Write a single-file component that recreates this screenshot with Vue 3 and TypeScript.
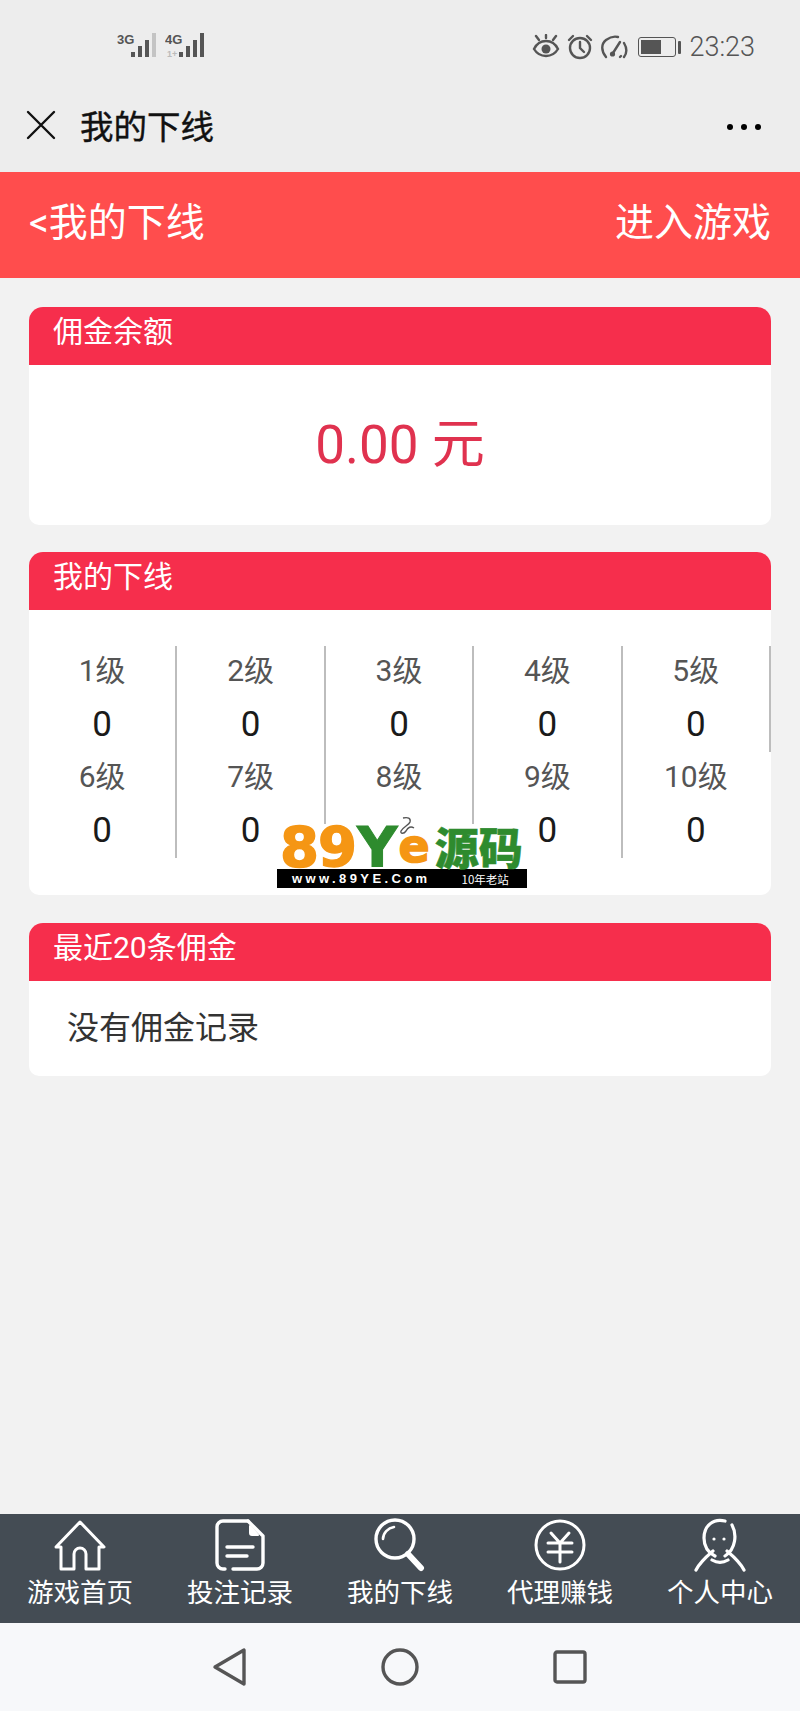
<template>
  <div class="page">
    <!-- status bar -->
    <div class="status">
      <div class="signal">
        <svg width="40" height="26" viewBox="0 0 40 26">
          <text x="0" y="11" class="sig-text">3G</text>
          <rect x="14" y="19" width="4" height="5" fill="#555" />
          <rect x="21" y="13" width="4" height="11" fill="#555" />
          <rect x="28" y="7" width="4" height="17" fill="#555" />
          <rect x="35" y="0" width="4" height="24" fill="#c4c4c4" />
        </svg>
        <svg width="41" height="26" viewBox="0 0 41 26">
          <text x="0" y="11" class="sig-text">4G</text>
          <text x="2" y="24" class="sig-sub">1+</text>
          <rect x="14" y="19" width="4" height="5" fill="#555" />
          <rect x="21" y="13" width="4" height="11" fill="#555" />
          <rect x="28" y="7" width="4" height="17" fill="#555" />
          <rect x="35" y="0" width="4" height="24" fill="#555" />
        </svg>
      </div>
      <div class="status-right">
        <svg width="28" height="26" viewBox="0 0 28 26" fill="none" stroke="#555" stroke-width="2.4" stroke-linecap="round">
          <path d="M2 15c3-6 7-8 12-8s9 2 12 8c-3 5-7 7-12 7s-9-2-12-7z" />
          <circle cx="14" cy="15" r="4.5" fill="#555" stroke="none" />
          <path d="M4 2l3 4M14 1v3M24 2l-3 4" />
        </svg>
        <svg width="26" height="26" viewBox="0 0 26 26" fill="none" stroke="#555" stroke-width="2.4" stroke-linecap="round">
          <circle cx="13" cy="14" r="10" />
          <path d="M13 8v6l4 4" />
          <path d="M2 6l4-4M24 6l-4-4" />
        </svg>
        <svg width="28" height="26" viewBox="0 0 28 26" fill="none" stroke="#555" stroke-width="2.4" stroke-linecap="round">
          <path d="M6 23C1 17 1 10 6 6c4-3 8-4 12-3" />
          <path d="M24 9c3 5 3 10 0 14" />
          <path d="M13 19l7-11" />
          <circle cx="12.5" cy="20" r="2.6" fill="#555" stroke="none" />
          <path d="M20 23l1-1" />
        </svg>
        <div class="battery">
          <div class="battery-body"><div class="battery-fill" :style="{ width: batteryLevel + '%' }"></div></div>
          <div class="battery-cap"></div>
        </div>
        <span class="time">23:23</span>
      </div>
    </div>

    <!-- wechat webview title -->
    <div class="webbar">
      <svg width="30" height="30" viewBox="0 0 30 30" stroke="#111" stroke-width="2.4" stroke-linecap="round">
        <path d="M2 2l26 26M28 2L2 28" />
      </svg>
      <span class="webbar-title">我的下线</span>
      <div class="dots"><i></i><i></i><i></i></div>
    </div>

    <!-- red header -->
    <div class="header">
      <span>&lt;我的下线</span>
      <span>进入游戏</span>
    </div>

    <div class="main">
      <section class="card">
        <div class="card-title">佣金余额</div>
        <div class="balance">0.00 元</div>
      </section>

      <section class="card card--team">
        <div class="card-title">我的下线</div>
        <div class="levels">
          <div
            v-for="item in levels"
            :key="item.label"
            class="level"
            :class="{ 'level--last': item.label === '10级' }"
          >
            <div class="level-label">{{ item.label }}</div>
            <div class="level-val">{{ item.count }}</div>
          </div>
        </div>

        <!-- watermark over the list -->
        <div class="logo">
          <div class="logo-top">
            <span class="logo-o">89</span><span class="logo-y">Y</span><span class="logo-e">e</span><span class="logo-cn">源码</span>
          </div>
          <div class="logo-band">
            <span class="logo-url">www.89YE.Com</span>
            <span class="logo-age">10年老站</span>
          </div>
          <svg class="smudge" width="24" height="26" viewBox="0 0 24 26" fill="none" stroke="#555" stroke-width="1.4">
            <path d="M8 2c5-1 8 0 7 4-1 3-7 5-9 9-1 3 3 3 5 0 2-4 5-5 8-3" />
          </svg>
        </div>
      </section>

      <section class="card card--records">
        <div class="card-title">最近20条佣金</div>
        <div class="empty">没有佣金记录</div>
      </section>
    </div>

    <!-- tab bar -->
    <nav class="tabs">
      <div class="tab">
        <svg width="54" height="54" viewBox="0 0 54 54" fill="none" stroke="#fff" stroke-width="3" stroke-linejoin="round" stroke-linecap="round">
          <path d="M3 29L27 4l24 25h-5v22H33V36a6 6 0 0 0-12 0v15H8V29z" />
        </svg>
        <span>游戏首页</span>
      </div>
      <div class="tab">
        <svg width="54" height="54" viewBox="0 0 54 54" fill="none" stroke="#fff" stroke-width="3.4" stroke-linejoin="round" stroke-linecap="round">
          <path d="M35 3H10a6 6 0 0 0-6 6v36a6 6 0 0 0 6 6h2" />
          <path d="M35 3l15 15v27a6 6 0 0 1-6 6H20" />
          <path d="M37 8l8 9h-6a2 2 0 0 1-2-2z" fill="#fff" stroke-width="2" />
          <path d="M14 29h26M14 38h20" />
        </svg>
        <span>投注记录</span>
      </div>
      <div class="tab">
        <svg width="54" height="54" viewBox="0 0 54 54" fill="none" stroke="#fff" stroke-linecap="round">
          <circle cx="22" cy="21" r="19" stroke-width="3.4" />
          <path d="M10 21c0-6 5-11 11-12" stroke-width="2.6" />
          <path d="M35 36l13 14" stroke-width="6" />
        </svg>
        <span>我的下线</span>
      </div>
      <div class="tab">
        <svg width="54" height="54" viewBox="0 0 54 54" fill="none" stroke="#fff" stroke-width="3" stroke-linecap="round">
          <circle cx="27" cy="27" r="24" />
          <path d="M18 15l9 10 9-10M15 25h24M15 34h24M27 25v19" />
        </svg>
        <span>代理赚钱</span>
      </div>
      <div class="tab">
        <svg width="54" height="54" viewBox="0 0 54 54" fill="none" stroke="#fff" stroke-width="3.2" stroke-linecap="round">
          <path d="M32 3C20 0 11 8 11 20c0 9 5 15 11 18" />
          <path d="M39 7c5 9 4 24-7 31" />
          <path d="M20 33C13 39 7 44 3 52M34 33c7 6 13 11 17 19M19 42c5 3 11 3 16 0" />
          <circle cx="21" cy="21" r="1.6" fill="#fff" stroke="none" />
          <circle cx="31" cy="21" r="1.6" fill="#fff" stroke="none" />
        </svg>
        <span>个人中心</span>
      </div>
    </nav>

    <!-- android nav -->
    <div class="sysnav">
      <div class="sys-cell">
        <svg width="36" height="40" viewBox="0 0 36 40" fill="none" stroke="#555" stroke-width="3.4" stroke-linejoin="round">
          <path d="M32 3v34L3 20z" />
        </svg>
      </div>
      <div class="sys-cell">
        <svg width="38" height="38" viewBox="0 0 38 38" fill="none" stroke="#555" stroke-width="3.4">
          <circle cx="19" cy="19" r="17" />
        </svg>
      </div>
      <div class="sys-cell">
        <svg width="34" height="34" viewBox="0 0 34 34" fill="none" stroke="#555" stroke-width="3.4" stroke-linejoin="round">
          <rect x="2" y="2" width="30" height="30" rx="2" />
        </svg>
      </div>
    </div>
  </div>
</template>

<script setup lang="ts">
interface Level {
  label: string
  count: string
}

const batteryLevel = 62

const levels: Level[] = Array.from({ length: 10 }, (_, i) => ({
  label: `${i + 1}级`,
  // level 8's count sits under the watermark
  count: i === 7 ? '' : '0',
}))
</script>

<style>
html,
body {
  margin: 0;
  background: #f2f2f2;
}
</style>

<style scoped>
.page {
  width: 800px;
  height: 1711px;
  display: flex;
  flex-direction: column;
  background: #f2f2f2;
  font-family: Roboto, "Noto Sans CJK SC", sans-serif;
  overflow: hidden;
}

/* status bar */
.status {
  height: 85px;
  flex-shrink: 0;
  box-sizing: border-box;
  padding: 33px 45px 0 117px;
  display: flex;
  justify-content: space-between;
  align-items: flex-start;
  background: #ededed;
}

.signal {
  display: flex;
  gap: 8px;
}

.sig-text {
  font: 700 13px "Liberation Sans", sans-serif;
  fill: #555;
}

.sig-sub {
  font: 700 9px "Liberation Sans", sans-serif;
  fill: #bbb;
}

.status-right {
  display: flex;
  align-items: center;
  gap: 7px;
  margin-top: 1px;
}

.battery {
  display: flex;
  align-items: center;
  gap: 2px;
  margin-left: 3px;
}

.battery-body {
  width: 38px;
  height: 20px;
  box-sizing: border-box;
  border: 1.5px solid #555;
  border-radius: 3px;
  padding: 2px;
}

.battery-fill {
  height: 100%;
  background: #555;
}

.battery-cap {
  width: 3px;
  height: 13px;
  background: #555;
  border-radius: 1px;
}

.time {
  font-size: 27px;
  font-weight: 300;
  color: #555;
  line-height: 26px;
  margin-left: 1px;
}

/* webview title */
.webbar {
  height: 87px;
  flex-shrink: 0;
  box-sizing: border-box;
  padding: 0 39px 8px 26px;
  display: flex;
  align-items: center;
  background: #ededed;
}

.webbar-title {
  margin-left: 24px;
  font-size: 33.5px;
  font-weight: 400;
  color: #111;
  -webkit-text-stroke: 0.4px #111;
}

.dots {
  margin-left: auto;
  display: flex;
  gap: 8px;
  padding-top: 4px;
}

.dots i {
  width: 6px;
  height: 6px;
  border-radius: 50%;
  background: #000;
}

/* red header */
.header {
  height: 106px;
  flex-shrink: 0;
  box-sizing: border-box;
  padding: 0 29px 13px;
  display: flex;
  justify-content: space-between;
  align-items: center;
  background: #ff4d4d;
  color: #fff;
  font-size: 39px;
  font-weight: 400;
}

/* cards */
.main {
  flex: 1;
  box-sizing: border-box;
  padding: 29px 29px 0;
  display: flex;
  flex-direction: column;
  gap: 27px;
}

.card {
  position: relative;
  background: #fff;
  border-radius: 14px 14px 10px 10px;
}

.card--records {
  margin-top: 1px;
}

.card-title {
  height: 58px;
  box-sizing: border-box;
  padding-left: 24px;
  line-height: 50px;
  background: #f62e4c;
  border-radius: 14px 14px 0 0;
  color: #fff;
  font-size: 30px;
  font-weight: 400;
}

.balance {
  height: 160px;
  box-sizing: border-box;
  padding-bottom: 10px;
  display: flex;
  align-items: center;
  justify-content: center;
  white-space: pre;
  font-size: 53px;
  color: #e0324f;
}

.levels {
  display: grid;
  grid-template-columns: repeat(5, 1fr);
  padding: 36px 0 37px;
}

.level {
  height: 106px;
  box-sizing: border-box;
  border-right: 2px solid #bdbdbd;
  text-align: center;
}

.level--last {
  border-right-color: transparent;
}

.level-label {
  line-height: 49px;
  font-size: 30px;
  color: #555;
}

.level-val {
  height: 57px;
  line-height: 60px;
  font-size: 35px;
  color: #1a1a1a;
}

.empty {
  height: 95px;
  box-sizing: border-box;
  padding-left: 38px;
  line-height: 94px;
  font-size: 32px;
  color: #333;
}

/* watermark */
.logo {
  position: absolute;
  left: 248px;
  top: 272px;
  width: 250px;
  background: #fff;
}

.logo-top {
  height: 45px;
  display: flex;
  align-items: flex-end;
  padding-left: 3px;
  font-family: "DejaVu Sans", sans-serif;
  font-weight: 700;
}

.logo-top span {
  line-height: 45px;
  white-space: nowrap;
}

.logo-o {
  font-size: 56px;
  letter-spacing: -1px;
  color: #f59614;
  -webkit-text-stroke: 1.5px #f59614;
}

.logo-y {
  font-size: 56px;
  margin-left: 1px;
  color: #2e8b2e;
  -webkit-text-stroke: 1px #2e8b2e;
}

.logo-e {
  font-size: 46px;
  margin-left: 1px;
  color: #f59614;
  -webkit-text-stroke: 1.5px #f59614;
}

.logo-cn {
  margin-left: 5px;
  font-family: "Noto Sans CJK SC", sans-serif;
  font-size: 44px;
  font-weight: 900;
  color: #2e8b2e;
  -webkit-text-stroke: 0.6px #2e8b2e;
}

.logo-band {
  height: 19px;
  display: flex;
  align-items: center;
  padding-left: 15px;
  background: #000;
  color: #fff;
  font-family: "Liberation Sans", "Noto Sans CJK SC", sans-serif;
}

.logo-url {
  font-size: 13px;
  font-weight: 700;
  letter-spacing: 3.4px;
}

.logo-age {
  margin-left: 31px;
  font-size: 11.5px;
  font-family: "Noto Sans CJK SC", sans-serif;
}

.smudge {
  position: absolute;
  left: 118px;
  top: -8px;
}

/* tab bar */
.tabs {
  height: 109px;
  flex-shrink: 0;
  display: grid;
  grid-template-columns: repeat(5, 1fr);
  background: #444c54;
}

.tab {
  display: flex;
  flex-direction: column;
  align-items: center;
  padding-top: 4px;
  color: #fff;
  font-size: 26.5px;
  font-weight: 400;
}

.tab span {
  line-height: 36px;
  margin-top: 3px;
}

/* system nav */
.sysnav {
  height: 88px;
  flex-shrink: 0;
  box-sizing: border-box;
  display: flex;
  justify-content: center;
  background: #f7f8fa;
}

.sys-cell {
  width: 170px;
  display: flex;
  align-items: center;
  justify-content: center;
}
</style>
